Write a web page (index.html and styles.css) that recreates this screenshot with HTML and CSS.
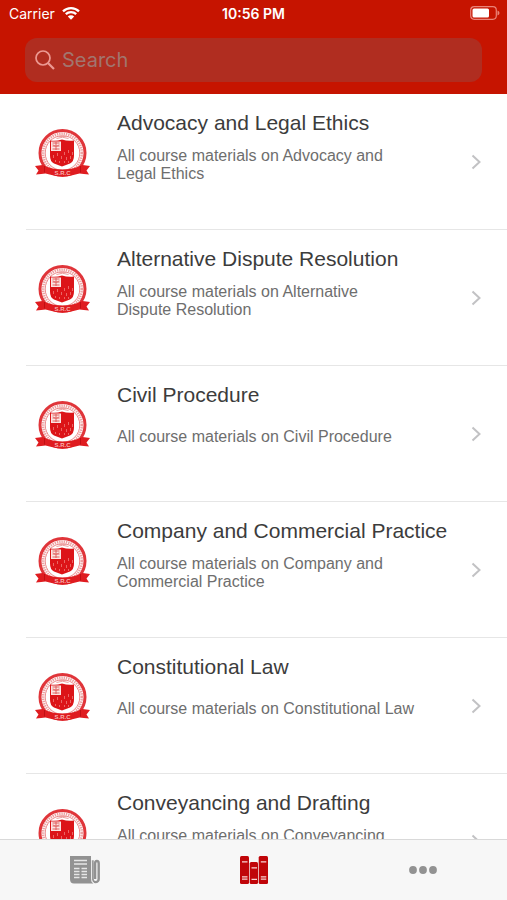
FILE: index.html
```html
<!DOCTYPE html>
<html lang="en">
<head>
<meta charset="utf-8">
<meta name="viewport" content="width=device-width, initial-scale=1">
<title>Courses</title>
<link rel="stylesheet" href="styles.css">
</head>
<body>
<svg class="sprite" aria-hidden="true">
  <symbol id="crest" viewBox="0 0 56 50">
    <circle cx="28" cy="25" r="22.500" fill="#fff" stroke="#e0353a" stroke-width="3"/>
    <circle cx="28" cy="25" r="19.400" fill="none" stroke="#eda0a0" stroke-width="2.600" stroke-dasharray="1.400 .9"/>
    <circle cx="28" cy="25" r="17.300" fill="none" stroke="#e66a6c" stroke-width=".8"/>
    <path d="M22 10.500q6-2.500 12 0M24 8.500h8" fill="none" stroke="#eca0a0" stroke-width="1"/>
    <path d="M15.500 12.500q6 1 12-1 6 2 12 1v15q0 6-4 8-4 1.500-8 3-4-1.500-8-3-4-2-4-8z" fill="#dc1418"/>
    <path d="M16.500 13.500h10v9.500h-10z" fill="#fbe4e2"/>
    <path d="M18 15h7M18 18h7M18 21h7M21.500 14v8M18.500 16.500l2 2M24.500 16.500l-2 2" stroke="#dd5552" stroke-width=".9"/>
    <path d="M30 24v3M34 22v3M38 24v3M19 27v3M23 25v3M27 28v3M32 29v3M36 28v3M21 32v2M25 33v2M30 33v2M34 33v2" stroke="#ea6664" stroke-width="1"/>
    <path d="M8 37Q28 46 48 37L55.500 38 52 42.500 54.500 46.500Q49 46 45 45.500 28 51 11 45.500 7 46 1.500 46.500L4 42.500.5 38z" fill="#df1c20"/>
    <path d="M10 38v6.500M46 38v6.500" stroke="#b90d10" stroke-width=".8"/>
    <text x="28" y="47" text-anchor="middle" class="crest-text">S.R.C</text>
  </symbol>
  <symbol id="chevron" viewBox="0 0 10 16">
    <path d="M1.500 1.500 8.500 8l-7 6.500" fill="none" stroke="#c2c2c4" stroke-width="2"/>
  </symbol>
</svg>

<header class="top">
  <div class="status">
    <span class="carrier">Carrier
      <svg class="wifi" viewBox="0 0 18 14" aria-hidden="true">
        <path d="M1 5.300a11.500 11.500 0 0 1 16 0M3.800 8.200a7.500 7.500 0 0 1 10.400 0" fill="none" stroke="#fff" stroke-width="2.300"/>
        <path d="M9 13.700 5.800 10.500a4.600 4.600 0 0 1 6.400 0z" fill="#fff"/>
      </svg>
    </span>
    <time class="clock">10:56 PM</time>
    <svg class="battery" viewBox="0 0 30 14" aria-hidden="true">
      <rect x=".7" y=".7" width="25.600" height="12.600" rx="3.500" fill="none" stroke="#ea8378" stroke-width="1.200"/>
      <rect x="2.500" y="2.500" width="16.500" height="9" rx="1.500" fill="#fff"/>
      <path d="M27.500 4.500q2 .7 2 2.500t-2 2.500z" fill="#ea8378"/>
    </svg>
  </div>
  <label class="search">
    <svg class="glass" viewBox="0 0 20 20" aria-hidden="true">
      <circle cx="8" cy="8" r="7" fill="none" stroke="#ec9992" stroke-width="1.700"/>
      <path d="m13 13 6 6" stroke="#ec9992" stroke-width="2.200"/>
    </svg>
    <input class="search-input" type="search" placeholder="Search" aria-label="Search">
  </label>
</header>

<main class="content">
  <ul class="courses">
    <li><a class="course" href="#"><svg class="crest"><use href="#crest"/></svg><span class="info"><span class="title">Advocacy and Legal Ethics</span><span class="desc"><span>All course materials on Advocacy and Legal Ethics</span></span></span><svg class="chevron"><use href="#chevron"/></svg></a></li>
    <li><a class="course" href="#"><svg class="crest"><use href="#crest"/></svg><span class="info"><span class="title">Alternative Dispute Resolution</span><span class="desc"><span>All course materials on Alternative Dispute Resolution</span></span></span><svg class="chevron"><use href="#chevron"/></svg></a></li>
    <li><a class="course" href="#"><svg class="crest"><use href="#crest"/></svg><span class="info"><span class="title">Civil Procedure</span><span class="desc"><span>All course materials on Civil Procedure</span></span></span><svg class="chevron"><use href="#chevron"/></svg></a></li>
    <li><a class="course" href="#"><svg class="crest"><use href="#crest"/></svg><span class="info"><span class="title">Company and Commercial Practice</span><span class="desc"><span>All course materials on Company and Commercial Practice</span></span></span><svg class="chevron"><use href="#chevron"/></svg></a></li>
    <li><a class="course" href="#"><svg class="crest"><use href="#crest"/></svg><span class="info"><span class="title">Constitutional Law</span><span class="desc"><span>All course materials on Constitutional Law</span></span></span><svg class="chevron"><use href="#chevron"/></svg></a></li>
    <li><a class="course" href="#"><svg class="crest"><use href="#crest"/></svg><span class="info"><span class="title">Conveyancing and Drafting</span><span class="desc"><span>All course materials on Conveyancing and Drafting</span></span></span><svg class="chevron"><use href="#chevron"/></svg></a></li>
  </ul>
</main>

<nav class="tabs">
  <a class="tab" href="#" aria-label="News">
    <svg width="30" height="30" viewBox="0 0 30 30" aria-hidden="true">
      <path d="M0 1h21v23q0 3 2.500 4.500H4Q0 28.500 0 24z" fill="#929292"/>
      <path d="M21 6.500h1.500V24a3.100 3.100 0 0 0 6.200 0V8.500q0-2.500-1.800-2.500t-1.800 2.500V24" fill="none" stroke="#929292" stroke-width="2.400"/>
      <path d="M21.600 5v19.500q.3 2.800 2.600 3.800" fill="none" stroke="#f7f7f7" stroke-width=".9"/>
      <path d="M4 5.500h13M4 9h13M4 13.500h5.500M11.500 13.500h5.500M4 16.500h5.500M11.500 16.500h5.500M4 19.500h5.500M11.500 19.500h5.500M4 22.500h5.500M11.500 22.500h5.500" stroke="#e6e6e6" stroke-width="1.500"/>
    </svg>
  </a>
  <a class="tab" href="#" aria-label="Courses" aria-current="page">
    <svg width="28" height="28" viewBox="0 0 28 28" aria-hidden="true">
      <g fill="#c00509">
        <rect width="9" height="28" rx="1.500"/>
        <rect x="9.700" y="6" width="8.300" height="22" rx="1.500"/>
        <rect x="18.700" width="9.300" height="28" rx="1.500"/>
      </g>
      <path d="M2 5.800h5.500M2 20.800h5.500M2 23.200h5.500M11.500 11.800H17M11.500 23.300H17M20.800 5.800h5.500M20.800 20.800h5.500M20.800 23.200h5.500" stroke="#f9d5d3" stroke-width="1.200"/>
    </svg>
  </a>
  <a class="tab" href="#" aria-label="More">
    <svg width="28" height="8" viewBox="0 0 28 8" aria-hidden="true">
      <g fill="#929292"><circle cx="4" cy="4" r="3.900"/><circle cx="14" cy="4" r="3.900"/><circle cx="24" cy="4" r="3.900"/></g>
    </svg>
  </a>
</nav>
</body>
</html>
```

FILE: styles.css
```css
* {
  box-sizing: border-box;
}

body {
  margin: 0;
  height: 100vh;
  display: flex;
  flex-direction: column;
  background: #fff;
  font-family: "Liberation Sans", Arial, sans-serif;
}

.sprite {
  display: none;
}

.crest-text {
  font-size: 6px;
  font-weight: 700;
  fill: #f6b5b3;
}

.top {
  flex: none;
  padding: 0 25px 12px;
  background: #c61400;
  font-family: Inter, sans-serif;
}

.status {
  display: grid;
  grid-template-columns: 1fr auto 1fr;
  align-items: center;
  height: 26px;
  margin: 0 -16px 12px;
  color: #fff;
  font-size: 14px;
}

.carrier {
  display: flex;
  align-items: center;
  gap: 7px;
}

.wifi {
  width: 18px;
  height: 14px;
}

.clock {
  font-weight: 600;
}

.battery {
  justify-self: end;
  width: 30px;
  height: 14px;
  margin-right: -2px;
}

.search {
  display: flex;
  align-items: center;
  gap: 7px;
  height: 44px;
  padding: 0 10px;
  border-radius: 12px;
  background: #b02d20;
}

.glass {
  flex: none;
  width: 20px;
  height: 20px;
}

.search-input {
  flex: 1;
  min-width: 0;
  padding: 0;
  border: 0;
  outline: 0;
  background: none;
  color: #fff;
  font: 20px Inter, sans-serif;
}

.search-input::placeholder {
  color: #a2756e;
  opacity: 1;
}

.content {
  flex: 1;
  min-height: 0;
  overflow: hidden;
}

.courses {
  margin: 0;
  padding: 0 0 0 26px;
  list-style: none;
}

.course {
  display: flex;
  align-items: flex-start;
  height: 136px;
  padding: 15px 26px 0 8px;
  border-bottom: 1px solid #e6e6e6;
  color: inherit;
  text-decoration: none;
}

.crest {
  flex: none;
  width: 57px;
  height: 50px;
  margin: 19px 26px 0 0;
}

.info {
  flex: 1;
  min-width: 0;
}

.title {
  display: block;
  color: #3c3c3c;
  font-size: 21px;
  line-height: 28px;
  white-space: nowrap;
}

.desc {
  display: flex;
  align-items: center;
  height: 56px;
  padding-right: 56px;
  color: #6e6e6e;
  font-size: 16px;
  line-height: 18px;
}

.chevron {
  flex: none;
  width: 10px;
  height: 16px;
  margin-top: 45px;
}

.tabs {
  flex: none;
  display: grid;
  grid-template-columns: repeat(3, 1fr);
  height: 61px;
  border-top: 1px solid #d9d9d9;
  background: #f7f7f7;
}

.tab {
  display: flex;
  align-items: center;
  justify-content: center;
}
```
